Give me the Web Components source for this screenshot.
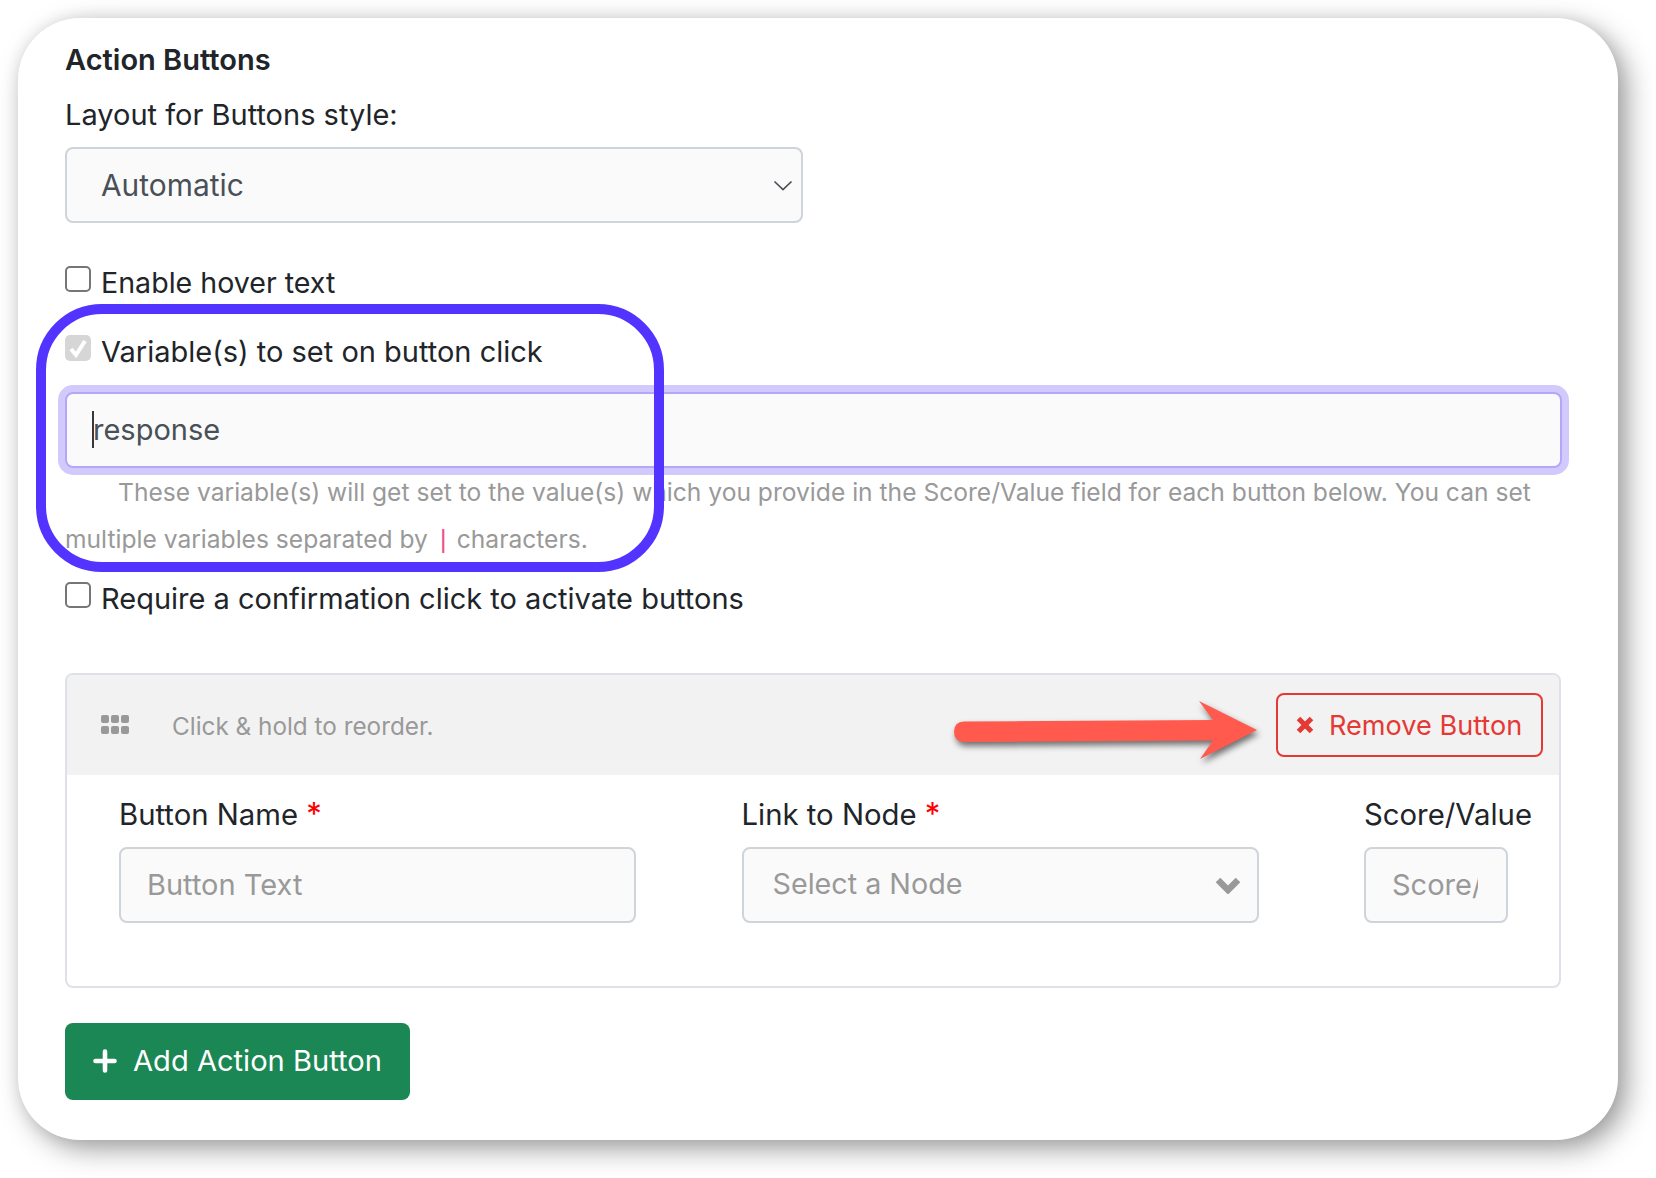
<!DOCTYPE html>
<html lang="en"><head><meta charset="utf-8"><title>Action Buttons</title>
<style>
html,body{margin:0;background:#fff}
body{width:1656px;height:1178px;overflow:hidden;font-family:Inter,"Liberation Sans",sans-serif;font-size:29px;line-height:43.2px;color:#212529}
</style></head><body>
<x-page>
<x-card>
  <x-text-line kind="title">Action Buttons</x-text-line>
  <x-text-line style="margin-top:12px">Layout for Buttons style:</x-text-line>
  <x-field type="select" value style="margin-top:11.5px;font-size:29.9px">Automatic</x-field>
  <x-check style="margin-top:37.5px;font-size:28.6px">Enable hover text</x-check>
  <x-check checked disabled style="margin-top:26px">Variable(s) to set on button click</x-check>
  <x-field focus caret value style="margin-top:19px">response</x-field>
  <x-help style="margin-top:1px">These variable(s) will get set to the value(s) which you provide in the Score/Value field for each button below. You can set multiple variables separated by <code>|</code> characters.</x-help>
  <x-check style="margin-top:14px">Require a confirmation click to activate buttons</x-check>
  <x-repeater style="margin-top:53.5px">
    <span slot="hint">Click &amp; hold to reorder.</span>
    <x-remove-button slot="action">Remove Button</x-remove-button>
    <x-col label="Button Name" required><x-field>Button Text</x-field></x-col>
    <x-col label="Link to Node" required><x-field type="nodeselect">Select a Node</x-field></x-col>
    <x-col label="Score/Value" narrow><x-field clip>Score/Value</x-field></x-col>
  </x-repeater>
  <x-add-button style="margin-top:35px">Add Action Button</x-add-button>
  <x-annotations slot="overlay"></x-annotations>
</x-card>
</x-page>
<script>
function def(name, css, html){
  customElements.define(name, class extends HTMLElement{
    constructor(){super();const r=this.attachShadow({mode:'open'});
      r.innerHTML='<style>'+css+'</style>'+(typeof html==='function'?html(this):html);}
  });
}
def('x-page',':host{display:block;padding:18px 0 0 18px}','<slot></slot>');
def('x-card',`:host{display:block;position:relative;box-sizing:border-box;width:1600px;height:1122px;padding:19.5px 56.5px 0 47px;background:#fff;border-radius:62px;box-shadow:9px 9px 28px rgba(0,0,0,.38),0 0 16px rgba(0,0,0,.07)}`,'<slot></slot><slot name="overlay"></slot>');
def('x-text-line',`:host{display:block}:host([kind=title]){font-weight:600;font-size:29px}`,'<slot></slot>');
def('x-field',`:host{display:block;position:relative;box-sizing:border-box;height:76px;padding:0 34px 0 26px;border:2px solid #ced4da;border-radius:8px;background:#fafafa;color:#999;font-size:29px;line-height:72px;white-space:nowrap}
 :host([value]){color:#495057}
 :host([type=select]){width:737.5px;padding-left:34px}
 :host([type=nodeselect]){padding-left:29px;line-height:70px;font-size:28.7px}
 :host([focus]){border-color:#b4a7fa;box-shadow:0 0 0 7px #d2cafd;padding-left:26px}
 :host([clip]){padding-right:0}
 .c{display:block;overflow:hidden}
 :host([clip]) .c{width:86px}
 .caret{position:absolute;left:25px;top:17px;width:2px;height:37px;background:#33393f}
 svg{position:absolute;fill:none}
 .s1{right:8px;top:31px;width:20px;height:11px;stroke:#495057;stroke-width:1.7}
 .s2{right:16px;top:27px;width:26px;height:18px;stroke:#999;stroke-width:6.5}`,
 el=>{const t=el.getAttribute('type');
  return `<span class="c"><slot></slot></span>`+(el.hasAttribute('caret')?'<i class="caret"></i>':'')+
  (t==='select'?'<svg class="s1" viewBox="0 0 20 11"><path d="M1.5 1.5 10 9.5 18.5 1.5"/></svg>':'')+
  (t==='nodeselect'?'<svg class="s2" viewBox="0 0 26 18"><path d="M3 4 13 14 23 4"/></svg>':'');});
def('x-check',`:host{display:flex;align-items:flex-start}
 .b{flex:none;box-sizing:border-box;width:26px;height:26px;margin:5px 10px 0 0;border:2px solid #767676;border-radius:5px;background:#fff}
 :host([disabled]) .b{border:0;background:#d6d6d6}
 svg{display:block;width:26px;height:26px;fill:none;stroke:#fff;stroke-width:4}`,
 el=>`<span class="b">${el.hasAttribute('checked')?'<svg viewBox="0 0 26 26"><path d="M6 14 11 20 20 6"/></svg>':''}</span><span><slot></slot></span>`);
def('x-help',`:host{display:block;width:1496px;font-size:24.6px;line-height:46.66px;color:#999;text-indent:53px}
 ::slotted(code){font-family:"Liberation Mono",monospace;font-size:25px;line-height:0;color:#e8528f;margin:0 -1px 0 1px}`,'<slot></slot>');
def('x-repeater',`:host{display:block;box-sizing:border-box;width:1496px;height:315px;border:2px solid #dee2e6;border-radius:8px;overflow:hidden}
 header{display:flex;align-items:center;height:100px;background:#f2f2f2;padding:0 16px 0 34px;color:#999;font-size:24.3px}
 .grip{flex:none;display:grid;grid-template-columns:repeat(3,8px);grid-auto-rows:8px;gap:3px 2px;margin:-2px 43px 0 0}
 .grip i{background:#999;border-radius:2px}
 .hint{flex:1;padding-top:2px}
 .body{display:flex;gap:105.5px;padding:18px 0 0 52px}`,
 `<header><span class="grip"><i></i><i></i><i></i><i></i><i></i><i></i></span><span class="hint"><slot name="hint"></slot></span><slot name="action"></slot></header><div class="body"><slot></slot></div>`);
def('x-col',`:host{display:block;flex:none;width:517px}:host([narrow]){width:144px}
 .l{display:block;white-space:nowrap;margin-bottom:10px;font-size:29.3px}
 b{font-weight:400;color:#f00;font-size:31px;line-height:0}`,
 el=>`<span class="l">${el.getAttribute('label')}${el.hasAttribute('required')?' <b>*</b>':''}</span><slot></slot>`);
def('x-remove-button',`:host{display:flex;align-items:center;box-sizing:border-box;width:267px;height:64px;border:2px solid #e53935;border-radius:8px;color:#e53935;font-size:27.1px;padding-left:18px}
 svg{flex:none;width:18px;height:18px;margin-right:15px;stroke:#e53935;stroke-width:5;fill:none}`,
 `<svg viewBox="0 0 18 18"><path d="M2.5 2.5 15.5 15.5M15.5 2.5 2.5 15.5"/></svg><slot></slot>`);
def('x-add-button',`:host{display:inline-flex;align-items:center;box-sizing:border-box;width:345px;height:77px;background:#1a8754;border-radius:8px;color:#fff;font-size:29.1px;padding:0 0 2px 28px}
 svg{flex:none;width:24px;height:24px;margin-right:16px;stroke:#fff;stroke-width:4.6;stroke-linecap:round;fill:none}`,
 `<svg viewBox="0 0 24 24"><path d="M12 2.5V21.5M2.5 12H21.5"/></svg><slot></slot>`);
def('x-annotations',`:host{position:absolute;inset:0;pointer-events:none}
 .ring{position:absolute;left:18px;top:286px;box-sizing:border-box;width:627.5px;height:268px;border:10px solid #5233ff;border-radius:66px}
 svg{position:absolute;left:920px;top:670px;width:330px;height:90px;overflow:visible;filter:drop-shadow(2px 4px 3px rgba(0,0,0,.55))}`,
 `<div class="ring"></div><svg viewBox="0 0 330 90"><path fill="#ff5a4d" d="M26 33.5 Q16 34 16 43.5 Q16 54 26 54 L275 52.5 L262 71 L319 42 L261 13 L275 32 Z"/></svg>`);
</script>
</body></html>
